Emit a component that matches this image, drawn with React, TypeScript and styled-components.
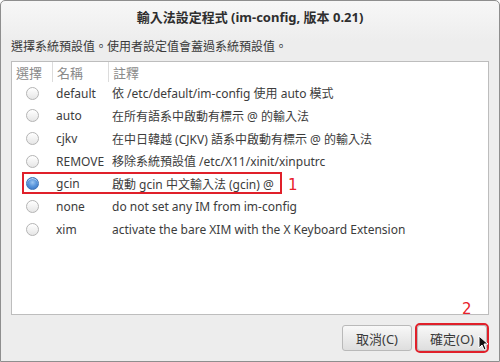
import React from "react";
import styled, { createGlobalStyle } from "styled-components";

const Global = createGlobalStyle`
  html, body { margin: 0; padding: 0; background: #ffffff; }
  body { font-family: "Noto Sans", "Noto Sans CJK TC", sans-serif; }
`;

const Window = styled.div`
  position: relative;
  box-sizing: border-box;
  width: 500px;
  height: 362px;
  border: 1px solid #8e8e8e;
  border-radius: 5px 5px 0 0;
  background: linear-gradient(#f7f7f7 0px, #ededed 40px, #ededed 100%);
  display: flex;
  flex-direction: column;
  color: #3a3a3a;
  overflow: hidden;
`;

const TitleBar = styled.div`
  height: 30px;
  display: flex;
  align-items: center;
  justify-content: center;
  font-size: 13px;
  font-weight: bold;
  color: #2e2e2e;
  font-family: "Noto Sans", "Noto Sans CJK TC", sans-serif;
`;

const Subtitle = styled.div`
  padding: 7px 0 0 10px;
  height: 23px;
  font-size: 12px;
  line-height: 18px;
  color: #3a3a3a;
`;

const ListBox = styled.div`
  position: relative;
  margin: 0 10px;
  height: 254px;
  box-sizing: border-box;
  border: 1px solid #bdbdbd;
  background: #ffffff;
  display: flex;
  flex-direction: column;
`;

const Grid = styled.div`
  display: grid;
  grid-template-columns: 40px 56px 1fr;
`;

const HeaderCell = styled.div<{ $sep?: boolean }>`
  height: 20px;
  display: flex;
  align-items: center;
  padding-left: 4px;
  font-size: 13px;
  color: #8a8a8a;
  border-left: ${(p) => (p.$sep ? "1px solid #dcdcdc" : "none")};
`;

const Cell = styled.div`
  height: 22.67px;
  display: flex;
  align-items: center;
  padding-left: 4px;
  font-size: 12px;
  color: #3c3c3c;
  white-space: nowrap;
`;

const RadioCell = styled(Cell)`
  justify-content: center;
  padding-left: 0;
`;

const Radio = styled.span<{ $on?: boolean }>`
  box-sizing: border-box;
  width: 13px;
  height: 13px;
  border-radius: 50%;
  border: 1px solid ${(p) => (p.$on ? "#3d73b8" : "#b4b4b4")};
  background: ${(p) =>
    p.$on
      ? "radial-gradient(circle at 50% 40%, #9cc6f2 0%, #5b97dc 45%, #2f6cc0 100%)"
      : "linear-gradient(#ffffff, #e6e6e6)"};
  box-shadow: inset 0 1px 0 rgba(255,255,255,0.6);
`;

const Highlight = styled.div`
  position: absolute;
  left: 10px;
  top: 110px;
  width: 260px;
  height: 22px;
  box-sizing: border-box;
  border: 2px solid #e0202a;
  pointer-events: none;
`;

const Mark = styled.span<{ $x: number; $y: number }>`
  position: absolute;
  left: ${(p) => p.$x}px;
  top: ${(p) => p.$y}px;
  font-family: "DejaVu Sans", sans-serif;
  font-size: 15px;
  line-height: 16px;
  color: #e8202a;
`;

const Footer = styled.div`
  flex: 1;
  display: flex;
  justify-content: flex-end;
  align-items: center;
  gap: 5px;
  padding: 0 12px 0 0;
`;

const Button = styled.button<{ $marked?: boolean }>`
  box-sizing: border-box;
  width: 70px;
  height: 26px;
  border: 1px solid #b9b9b9;
  border-radius: 3px;
  background: linear-gradient(#f8f8f8, #dedede);
  font-family: "Noto Sans", "Noto Sans CJK TC", sans-serif;
  font-size: 13px;
  color: #3a3a3a;
  padding: 0;
  outline: ${(p) => (p.$marked ? "2px solid #e0202a" : "none")};
  outline-offset: 0px;
`;

const Cursor = styled.svg`
  position: absolute;
  left: 477px;
  top: 334px;
`;

const rows = [
  { name: "default", note: "依 /etc/default/im-config 使用 auto 模式" },
  { name: "auto", note: "在所有語系中啟動有標示 @ 的輸入法" },
  { name: "cjkv", note: "在中日韓越 (CJKV) 語系中啟動有標示 @ 的輸入法" },
  { name: "REMOVE", note: "移除系統預設值 /etc/X11/xinit/xinputrc" },
  { name: "gcin", note: "啟動 gcin 中文輸入法 (gcin) @", on: true },
  { name: "none", note: "do not set any IM from im-config" },
  { name: "xim", note: "activate the bare XIM with the X Keyboard Extension" },
];

export default function App() {
  return (
    <>
      <Global />
      <Window>
        <TitleBar>輸入法設定程式 (im-config, 版本 0.21)</TitleBar>
        <Subtitle>選擇系統預設值。使用者設定值會蓋過系統預設值。</Subtitle>
        <ListBox>
          <Grid>
            <HeaderCell>選擇</HeaderCell>
            <HeaderCell $sep>名稱</HeaderCell>
            <HeaderCell $sep>註釋</HeaderCell>
            {rows.map((r) => (
              <React.Fragment key={r.name}>
                <RadioCell>
                  <Radio $on={r.on} />
                </RadioCell>
                <Cell>{r.name}</Cell>
                <Cell>{r.note}</Cell>
              </React.Fragment>
            ))}
          </Grid>
          <Highlight />
          <Mark $x={276} $y={115}>1</Mark>
        </ListBox>
        <Footer>
          <Button>取消(C)</Button>
          <Button $marked>確定(O)</Button>
        </Footer>
        <Mark $x={461} $y={300}>2</Mark>
        <Cursor width="10" height="16" viewBox="0 0 10 16">
          <path d="M1 1 L1 13 L4 10 L6 15 L8 14 L6 9 L10 9 Z" fill="#111" stroke="#fff" strokeWidth="1" />
        </Cursor>
      </Window>
    </>
  );
}
